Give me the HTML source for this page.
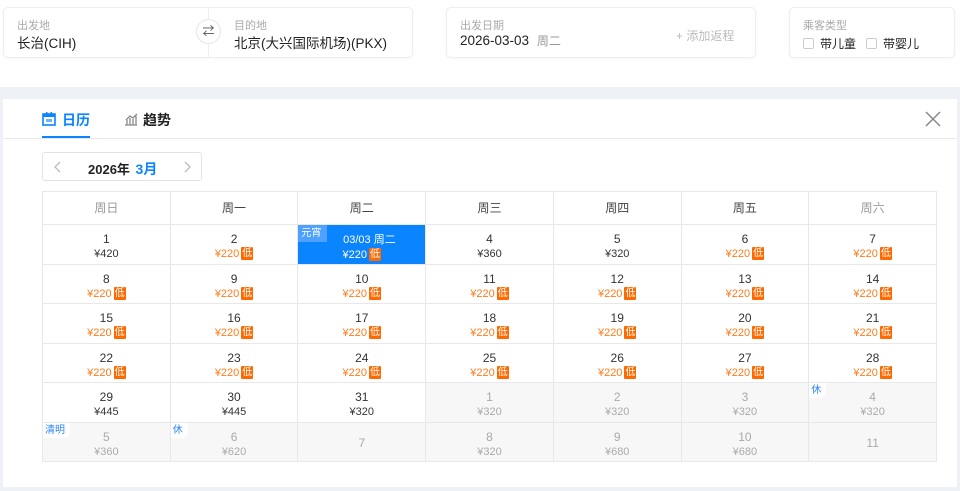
<!DOCTYPE html>
<html><head><meta charset="utf-8"><style>
*{margin:0;padding:0;box-sizing:border-box}
body{width:960px;height:491px;overflow:hidden;background:#fff;font-family:"Liberation Sans","Noto Sans CJK SC",sans-serif;position:relative;color:#333}
.card{position:absolute;top:7px;height:51px;background:#fff;border:1px solid #eceef1;border-radius:5px;box-shadow:0 1px 3px rgba(0,0,0,.04)}
.lab{position:absolute;font-size:11px;color:#aaa;top:9px}
.val{position:absolute;font-size:13.5px;color:#222;top:24px}
.gray{position:absolute;left:0;top:87px;width:960px;height:404px;background:#eef1f6}
.panel{position:absolute;left:3px;top:99px;width:954px;height:388px;background:#fff}
.grid{position:absolute;left:42px;top:191px;width:895px;display:grid;grid-template-columns:repeat(7,1fr);border-left:1px solid #e8e8e8;border-top:1px solid #e8e8e8}
.grid div{border-right:1px solid #e8e8e8;border-bottom:1px solid #e8e8e8;height:39.5px;text-align:center;position:relative;font-size:12px}
.grid .h{height:33px;line-height:32px;font-size:12px;color:#444}
.n{display:block;padding-top:7px;line-height:15px;font-size:12px;color:#333}
.p{display:block;font-size:11px;line-height:14px;color:#333}
.lo .p{color:#ff7a1a}
.lo .p b{display:inline-block;background:#ff6a00;color:#fff;font-weight:normal;font-size:10px;line-height:13px;padding:0 1px;margin-left:2px;vertical-align:top;border-radius:1px}
.g{background:#f7f7f7}
.g .n,.g .p{color:#aaa}
.tag{position:absolute;left:0;top:0;font-size:10px;color:#2e86f5;background:#fff;padding:0 5px 0 2px;line-height:15px;border-radius:0 0 6px 0}
.sel{background:#0a84ff}
.sel .n,.sel .p{color:#fff}
</style></head><body>
<div class="card" style="left:3px;width:410px">
 <div class="lab" style="left:13px">出发地</div><div class="val" style="left:13px">长治(CIH)</div>
 <div style="position:absolute;left:204px;top:0;width:1px;height:49px;background:#eee"></div>
 <div style="position:absolute;left:192px;top:11px;width:25px;height:25px;border:1px solid #e6e6e6;border-radius:50%;background:#fff;font-size:12px;color:#555;text-align:center;line-height:22px">⇄</div>
 <div class="lab" style="left:230px">目的地</div><div class="val" style="left:230px">北京(大兴国际机场)(PKX)</div>
</div>
<div class="card" style="left:446px;width:310px">
 <div class="lab" style="left:13px">出发日期</div><div class="val" style="left:13px">2026-03-03 <span style="font-size:12px;color:#999;margin-left:4px">周二</span></div>
 <div style="position:absolute;left:229px;top:19px;font-size:12px;color:#bbb">+ 添加返程</div>
</div>
<div class="card" style="left:789px;width:166px">
 <div class="lab" style="left:13px">乘客类型</div>
 <div class="val" style="left:13px;font-size:12px;top:27px"><span style="display:inline-block;width:11px;height:11px;border:1px solid #ccc;border-radius:2px;vertical-align:-1px;margin-right:6px"></span>带儿童<span style="display:inline-block;width:11px;height:11px;border:1px solid #ccc;border-radius:2px;vertical-align:-1px;margin:0 6px 0 10px"></span>带婴儿</div>
</div>
<div class="gray"></div>
<div class="panel">
 <div style="position:absolute;left:39px;top:11px;font-size:14px;color:#0a84ff;font-weight:bold"><svg width="14" height="14" viewBox="0 0 14 14" style="vertical-align:-1px;margin-right:6px"><rect x="1" y="2" width="12" height="11" fill="none" stroke="#0a84ff" stroke-width="1.6"/><rect x="1" y="2" width="12" height="3" fill="#0a84ff"/><rect x="4" y="0" width="1.5" height="3" fill="#0a84ff"/><rect x="8.5" y="0" width="1.5" height="3" fill="#0a84ff"/><rect x="4" y="7" width="6" height="3" fill="#0a84ff" opacity=".6"/></svg>日历</div>
 <div style="position:absolute;left:39px;top:37px;width:48px;height:2px;background:#0a84ff"></div>
 <div style="position:absolute;left:121px;top:11px;font-size:14px;color:#222;font-weight:bold"><svg width="14" height="14" viewBox="0 0 14 14" style="vertical-align:-1px;margin-right:5px"><path d="M1 13h12M3 13V8M6 13V6M9 13V7M12 13V4M2 8l4-4 3 2 4-4" fill="none" stroke="#888" stroke-width="1.3"/></svg>趋势</div>
 <div style="position:absolute;left:0;top:39px;width:954px;height:1px;background:#e8e8e8"></div>
 <svg style="position:absolute;left:922px;top:12px" width="16" height="16" viewBox="0 0 16 16"><path d="M1 1L15 15M15 1L1 15" stroke="#888" stroke-width="1.5"/></svg>
 <div style="position:absolute;left:39px;top:53px;width:160px;height:29px;border:1px solid #e3e3e3;border-radius:3px">
  <svg style="position:absolute;left:11px;top:8px" width="8" height="12" viewBox="0 0 8 12"><path d="M6 1L1 6l5 5" fill="none" stroke="#bbb" stroke-width="1.3"/></svg>
  <span style="position:absolute;left:45px;top:6px;font-size:13px;font-weight:bold;color:#222">2026年 <span style="color:#0a84ff;font-size:14px;margin-left:2px">3月</span></span>
  <svg style="position:absolute;left:140px;top:8px" width="8" height="12" viewBox="0 0 8 12"><path d="M2 1l5 5-5 5" fill="none" stroke="#bbb" stroke-width="1.3"/></svg>
 </div>
</div>
<div class="grid">
<div class="h" style="color:#999">周日</div><div class="h">周一</div><div class="h">周二</div><div class="h">周三</div><div class="h">周四</div><div class="h">周五</div><div class="h" style="color:#999">周六</div>
<div><span class="n">1</span><span class="p">¥420</span></div>
<div class="lo"><span class="n">2</span><span class="p">¥220<b>低</b></span></div>
<div class="lo sel"><span class="tag" style="background:#4ea1ff;color:#fff;padding:1px 6px 1px 3px;border-radius:0">元宵</span><span class="n" style="padding-left:0;font-size:11px;padding-top:8px">&nbsp;&nbsp;&nbsp;&nbsp;&nbsp;03/03 周二</span><span class="p" style="color:#fff">¥220<b>低</b></span></div>
<div><span class="n">4</span><span class="p">¥360</span></div>
<div><span class="n">5</span><span class="p">¥320</span></div>
<div class="lo"><span class="n">6</span><span class="p">¥220<b>低</b></span></div>
<div class="lo"><span class="n">7</span><span class="p">¥220<b>低</b></span></div>
<div class="lo"><span class="n">8</span><span class="p">¥220<b>低</b></span></div>
<div class="lo"><span class="n">9</span><span class="p">¥220<b>低</b></span></div>
<div class="lo"><span class="n">10</span><span class="p">¥220<b>低</b></span></div>
<div class="lo"><span class="n">11</span><span class="p">¥220<b>低</b></span></div>
<div class="lo"><span class="n">12</span><span class="p">¥220<b>低</b></span></div>
<div class="lo"><span class="n">13</span><span class="p">¥220<b>低</b></span></div>
<div class="lo"><span class="n">14</span><span class="p">¥220<b>低</b></span></div>
<div class="lo"><span class="n">15</span><span class="p">¥220<b>低</b></span></div>
<div class="lo"><span class="n">16</span><span class="p">¥220<b>低</b></span></div>
<div class="lo"><span class="n">17</span><span class="p">¥220<b>低</b></span></div>
<div class="lo"><span class="n">18</span><span class="p">¥220<b>低</b></span></div>
<div class="lo"><span class="n">19</span><span class="p">¥220<b>低</b></span></div>
<div class="lo"><span class="n">20</span><span class="p">¥220<b>低</b></span></div>
<div class="lo"><span class="n">21</span><span class="p">¥220<b>低</b></span></div>
<div class="lo"><span class="n">22</span><span class="p">¥220<b>低</b></span></div>
<div class="lo"><span class="n">23</span><span class="p">¥220<b>低</b></span></div>
<div class="lo"><span class="n">24</span><span class="p">¥220<b>低</b></span></div>
<div class="lo"><span class="n">25</span><span class="p">¥220<b>低</b></span></div>
<div class="lo"><span class="n">26</span><span class="p">¥220<b>低</b></span></div>
<div class="lo"><span class="n">27</span><span class="p">¥220<b>低</b></span></div>
<div class="lo"><span class="n">28</span><span class="p">¥220<b>低</b></span></div>
<div><span class="n">29</span><span class="p">¥445</span></div>
<div><span class="n">30</span><span class="p">¥445</span></div>
<div><span class="n">31</span><span class="p">¥320</span></div>
<div class="g"><span class="n">1</span><span class="p">¥320</span></div>
<div class="g"><span class="n">2</span><span class="p">¥320</span></div>
<div class="g"><span class="n">3</span><span class="p">¥320</span></div>
<div class="g"><span class="tag">休</span><span class="n">4</span><span class="p">¥320</span></div>
<div class="g"><span class="tag">清明</span><span class="n">5</span><span class="p">¥360</span></div>
<div class="g"><span class="tag">休</span><span class="n">6</span><span class="p">¥620</span></div>
<div class="g"><span class="n" style="padding-top:13px">7</span></div>
<div class="g"><span class="n">8</span><span class="p">¥320</span></div>
<div class="g"><span class="n">9</span><span class="p">¥680</span></div>
<div class="g"><span class="n">10</span><span class="p">¥680</span></div>
<div class="g"><span class="n" style="padding-top:13px">11</span></div>
</div>
</body></html>
